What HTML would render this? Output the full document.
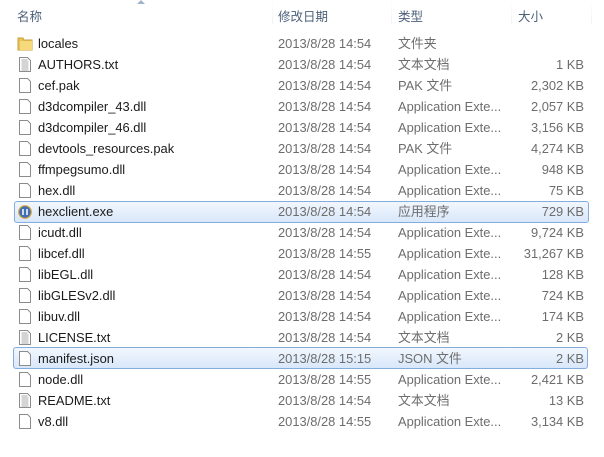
<!DOCTYPE html>
<html><head><meta charset="utf-8"><style>
body{margin:0;width:604px;height:457px;background:#fff;overflow:hidden;font-family:"Liberation Sans","Noto Sans CJK SC",sans-serif;font-size:12.9px;position:relative}
.h{position:absolute;top:6px;color:#4c607a;font-size:12.5px}
.sep{position:absolute;top:0;width:1px;height:24px;background:linear-gradient(#fff,#eef1f5)}
.r{position:absolute;left:0;width:604px;height:21px;line-height:21px}
.r span{position:absolute;top:0;white-space:nowrap}
.n{left:38px;color:#1a1a1a}
.d{left:278px;color:#6d6d6d}
.t{left:398px;color:#6d6d6d}
.s{right:20px;color:#6d6d6d}
.sel{position:absolute;left:14px;width:573px;height:20px;border:1px solid #84acdd;border-radius:3px;background:linear-gradient(#f2f7fd,#d8e7fa)}
.ic{position:absolute;left:19px;top:3px;width:12px;height:15px}
</style></head><body>
<div class="h" style="left:17px">名称</div>
<div style="position:absolute;left:137px;top:0;width:0;height:0;border-left:4px solid transparent;border-right:4px solid transparent;border-bottom:4px solid #9fb3c8"></div>
<div class="sep" style="left:272px"></div>
<div class="h" style="left:278px">修改日期</div>
<div class="sep" style="left:391px"></div>
<div class="h" style="left:398px">类型</div>
<div class="sep" style="left:511px"></div>
<div class="h" style="left:518px">大小</div>
<div class="sep" style="left:591px"></div>
<div class="sel" style="top:201px"></div>
<div class="sel" style="top:347px;left:13px"></div>
<div id="rows"></div>
<script>
var d=[["locales","2013/8/28 14:54","文件夹","","f"],
["AUTHORS.txt","2013/8/28 14:54","文本文档","1 KB","t"],
["cef.pak","2013/8/28 14:54","PAK 文件","2,302 KB",""],
["d3dcompiler_43.dll","2013/8/28 14:54","Application Exte...","2,057 KB",""],
["d3dcompiler_46.dll","2013/8/28 14:54","Application Exte...","3,156 KB",""],
["devtools_resources.pak","2013/8/28 14:54","PAK 文件","4,274 KB",""],
["ffmpegsumo.dll","2013/8/28 14:54","Application Exte...","948 KB",""],
["hex.dll","2013/8/28 14:54","Application Exte...","75 KB",""],
["hexclient.exe","2013/8/28 14:54","应用程序","729 KB","e"],
["icudt.dll","2013/8/28 14:54","Application Exte...","9,724 KB",""],
["libcef.dll","2013/8/28 14:55","Application Exte...","31,267 KB",""],
["libEGL.dll","2013/8/28 14:54","Application Exte...","128 KB",""],
["libGLESv2.dll","2013/8/28 14:54","Application Exte...","724 KB",""],
["libuv.dll","2013/8/28 14:54","Application Exte...","174 KB",""],
["LICENSE.txt","2013/8/28 14:54","文本文档","2 KB","t"],
["manifest.json","2013/8/28 15:15","JSON 文件","2 KB",""],
["node.dll","2013/8/28 14:55","Application Exte...","2,421 KB",""],
["README.txt","2013/8/28 14:54","文本文档","13 KB","t"],
["v8.dll","2013/8/28 14:55","Application Exte...","3,134 KB",""]];
var h="";
d.forEach(function(r,i){
var top=33+i*21;var ic;
if(r[4]=="f")ic='<svg class="ic" style="left:17px;width:16px" viewBox="0 0 16 15"><path d="M1 2h5l1 2h8v10H1z" fill="#e8c35a" stroke="#c9a23c"/><path d="M3 5h12v9H3z" fill="#f5d97a"/></svg>';
else if(r[4]=="e")ic='<svg class="ic" style="left:18px;width:14px;height:14px;top:4px" viewBox="0 0 14 14"><circle cx="7" cy="7" r="6.3" fill="#3f6fb5" stroke="#d9a640" stroke-width="1.2"/><path d="M5 4v6M9 4v6" stroke="#fff" stroke-width="1.5"/></svg>';
else{ic='<svg class="ic" viewBox="0 0 12 15"><path d="M.5 .5h8l3 3v11H.5z" fill="#fff" stroke="#8c8c8c"/>'+(r[4]=="t"?'<path d="M2.5 3h6M2.5 5h7M2.5 7h7M2.5 9h7M2.5 11h7M2.5 13h7" stroke="#aaa"/>':'')+'</svg>';}
h+='<div class="r" style="top:'+top+'px">'+ic+'<span class="n">'+r[0]+'</span><span class="d">'+r[1]+'</span><span class="t">'+r[2]+'</span><span class="s">'+r[3]+'</span></div>';
});
document.getElementById("rows").innerHTML=h;
</script>
</body></html>
